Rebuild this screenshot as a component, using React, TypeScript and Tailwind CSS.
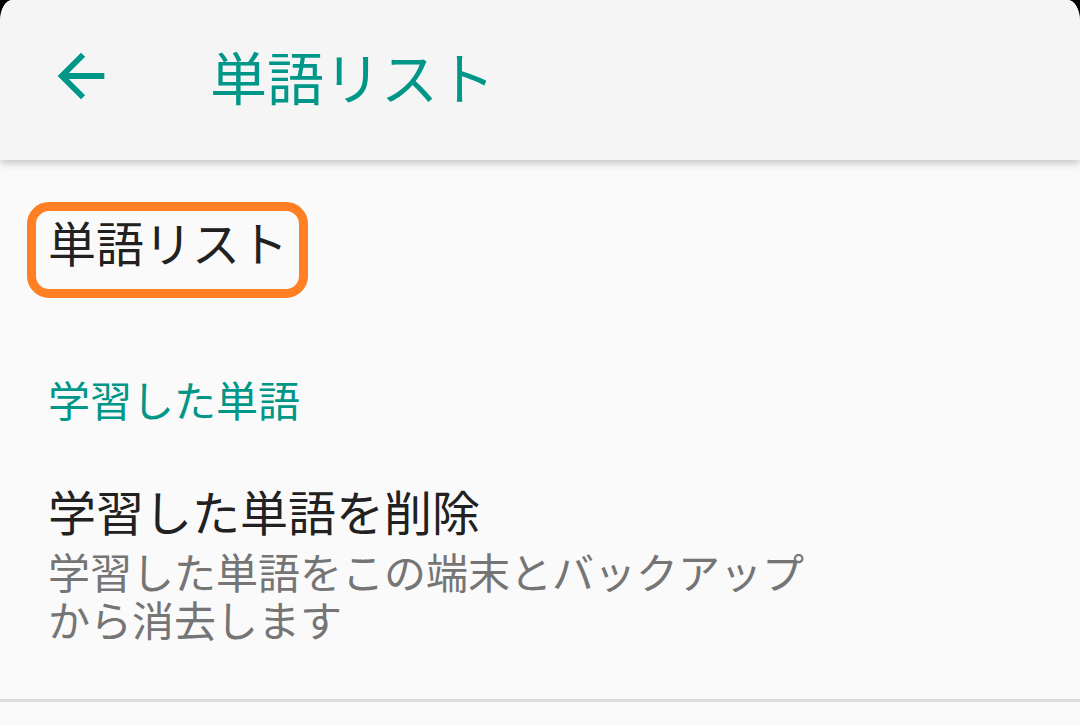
import { ReactNode } from 'react';

const FONT = { fontFamily: '"Noto Sans CJK JP", "Noto Sans", sans-serif' };

function BackArrow() {
  return (
    <svg viewBox="0 0 24 24" className="w-[70px] h-[70px]" fill="#009688">
      <path d="M20 11H7.83l5.59-5.59L12 4l-8 8 8 8 1.41-1.41L7.83 13H20v-2z" />
    </svg>
  );
}

function Highlight({ children }: { children: ReactNode }) {
  return (
    <span className="relative inline-block">
      {children}
      <span className="absolute left-[-21px] top-[-11px] w-[281px] h-[96px] rounded-[22px] border-[9px] border-[#fe7f24]" />
    </span>
  );
}

export default function App() {
  return (
    <div className="w-[1080px] h-[725px] bg-black overflow-hidden" style={FONT}>
      <div className="w-full h-full bg-[#fafafa] rounded-tl-[12px_22px] rounded-tr-[12px_22px] overflow-hidden flex flex-col">
        {/* app bar */}
        <header className="relative z-10 h-[160px] shrink-0 bg-[#f5f5f5] shadow-[0_3px_8px_rgba(0,0,0,0.22)] flex items-center">
          <div className="ml-[46px] w-[70px] h-[70px] -mt-[8px]">
            <BackArrow />
          </div>
          <h1 className="ml-[94px] -mt-[10px] text-[57px] leading-[64px] text-[#009688]">単語リスト</h1>
        </header>

        {/* preferences */}
        <div className="flex-1 flex flex-col">
          <div className="pl-[48px] pt-[53px] text-[48px] leading-[56px] text-[#212121]">
            <Highlight>単語リスト</Highlight>
          </div>

          <div className="pl-[48px] mt-[106px] text-[42px] leading-[48px] text-[#009688]">学習した単語</div>

          <div className="pl-[48px] mt-[59px]">
            <div className="text-[48px] leading-[56px] text-[#212121]">学習した単語を削除</div>
            <div className="mt-[9px] text-[42px] leading-[48px] text-[#757575]">
              学習した単語をこの端末とバックアップ
              <br />
              から消去します
            </div>
          </div>

          <div className="mt-[56px] h-[3px] bg-[#dcdcdc]" />
        </div>
      </div>
    </div>
  );
}
